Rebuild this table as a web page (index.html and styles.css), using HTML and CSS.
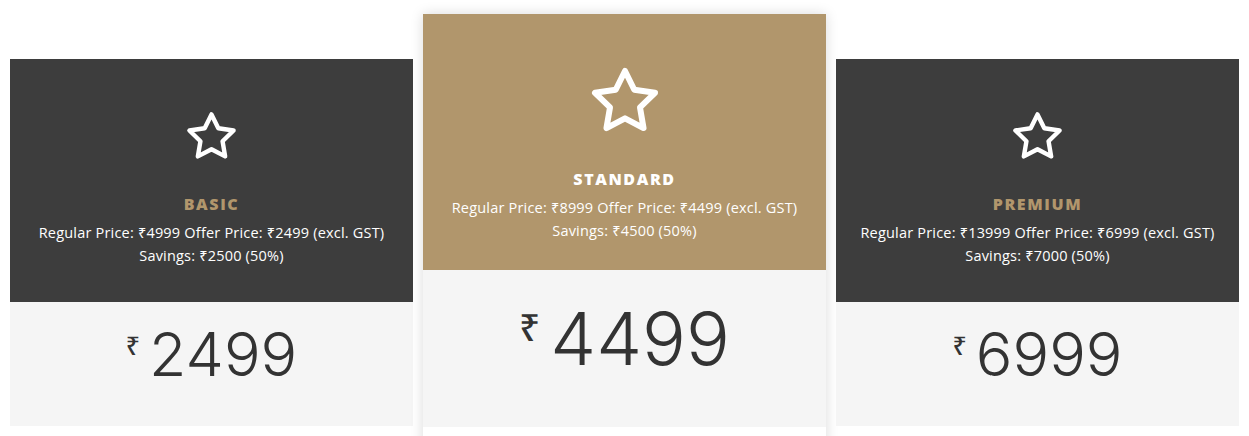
FILE: index.html
```html
<!DOCTYPE html>
<html>
<head>
<meta charset="utf-8">
<link rel="stylesheet" href="styles.css">
</head>
<body>
<div class="plans">
  <div class="card side">
    <div class="head">
      <svg class="star" viewBox="0 0 24 24"><polygon points="12 2 15.09 8.26 22 9.27 17 14.14 18.18 21.02 12 17.77 5.82 21.02 7 14.14 2 9.27 8.91 8.26"/></svg>
      <div class="title">BASIC</div>
      <div class="desc">Regular Price: ₹4999 Offer Price: ₹2499 (excl. GST)<br>Savings: ₹2500 (50%)</div>
    </div>
    <div class="price"><span class="cur">₹</span><span class="amt">2499</span></div>
  </div>
  <div class="card featured">
    <div class="head">
      <svg class="star" viewBox="0 0 24 24"><polygon points="12 2 15.09 8.26 22 9.27 17 14.14 18.18 21.02 12 17.77 5.82 21.02 7 14.14 2 9.27 8.91 8.26"/></svg>
      <div class="title">STANDARD</div>
      <div class="desc">Regular Price: ₹8999 Offer Price: ₹4499 (excl. GST)<br>Savings: ₹4500 (50%)</div>
    </div>
    <div class="price"><span class="cur">₹</span><span class="amt">4499</span></div>
  </div>
  <div class="card side">
    <div class="head">
      <svg class="star" viewBox="0 0 24 24"><polygon points="12 2 15.09 8.26 22 9.27 17 14.14 18.18 21.02 12 17.77 5.82 21.02 7 14.14 2 9.27 8.91 8.26"/></svg>
      <div class="title">PREMIUM</div>
      <div class="desc">Regular Price: ₹13999 Offer Price: ₹6999 (excl. GST)<br>Savings: ₹7000 (50%)</div>
    </div>
    <div class="price"><span class="cur">₹</span><span class="amt">6999</span></div>
  </div>
</div>
</body>
</html>
```
FILE: styles.css
```css
html, body {
  margin: 0;
  padding: 0;
  background: #ffffff;
  overflow: hidden;
}
body {
  font-family: "Open Sans", "Noto Sans", sans-serif;
}
.plans {
  display: flex;
  align-items: flex-start;
  gap: 10px;
  padding: 14px 10px 0 10px;
}
.card {
  width: 403px;
  flex: none;
  text-align: center;
}
.head {
  display: flex;
  flex-direction: column;
  align-items: center;
}
.star {
  fill: none;
  stroke: #ffffff;
  stroke-width: 2;
  stroke-linejoin: round;
  stroke-linecap: round;
}
.title {
  font-weight: 800;
  font-size: 16px;
  letter-spacing: 1.6px;
  line-height: 22px;
}
.desc {
  color: #ffffff;
  font-size: 14.5px;
  letter-spacing: 0.2px;
  line-height: 23px;
}
.price {
  background: #f5f5f5;
  color: #333333;
  display: flex;
  justify-content: center;
  align-items: flex-start;
  font-family: Inter, Roboto, "Liberation Sans", sans-serif;
  font-weight: 300;
}
.cur {
  font-family: "Noto Sans", sans-serif;
  font-weight: 500;
}

/* side cards */
.side {
  margin-top: 45px;
}
.side .head {
  background: #3d3d3d;
  height: 243px;
  box-sizing: border-box;
  padding-top: 51px;
}
.side .star {
  width: 53px;
  height: 53px;
}
.side .title {
  color: #b1966c;
  margin-top: 30px;
}
.side .desc {
  margin-top: 6px;
}
.side .price {
  height: 124px;
  box-sizing: border-box;
  padding-top: 22px;
}
.side .cur {
  font-size: 25px;
  line-height: 25px;
  margin-top: 9px;
  margin-right: 9px;
}
.side .amt {
  font-size: 61px;
  line-height: 61px;
}

/* featured card */
.featured {
  background: #ffffff;
  box-shadow: 0 0 12px rgba(0, 0, 0, 0.15);
  padding-bottom: 30px;
}
.featured .head {
  background: #b1966c;
  height: 256px;
  box-sizing: border-box;
  padding-top: 51px;
}
.featured .star {
  width: 72px;
  height: 72px;
}
.featured .title {
  color: #ffffff;
  margin-top: 31px;
}
.featured .desc {
  margin-top: 6px;
}
.featured .price {
  height: 157px;
  box-sizing: border-box;
  padding-top: 32px;
}
.featured .cur {
  font-size: 37px;
  line-height: 37px;
  margin-top: 6px;
  margin-right: 10px;
}
.featured .amt {
  font-size: 73px;
  line-height: 73px;
}
```
